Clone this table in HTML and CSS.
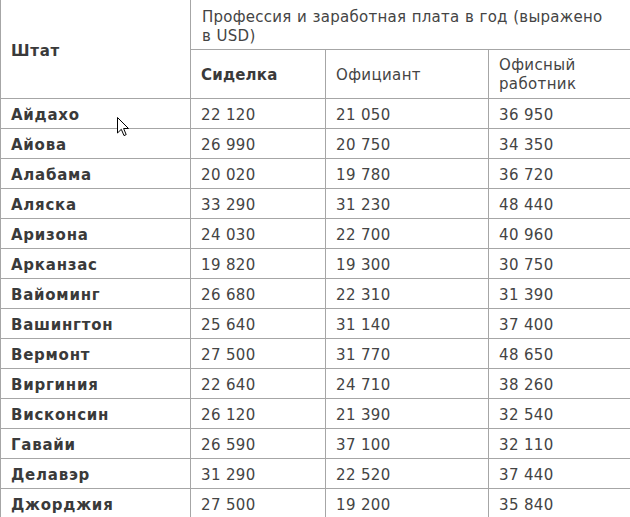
FILE: index.html
```html
<!DOCTYPE html>
<html lang="ru">
<head>
<meta charset="utf-8">
<title>Зарплаты</title>
<link rel="stylesheet" href="styles.css">
</head>
<body>
<div class="wrap">
<table class="pay">
  <colgroup>
    <col class="c1"><col class="c2"><col class="c3"><col class="c4">
  </colgroup>
  <thead>
    <tr class="h1">
      <th rowspan="2" class="state-h">Штат</th>
      <th colspan="3" class="group">Профессия и заработная плата в год (выражено<br>в USD)</th>
    </tr>
    <tr class="h2">
      <th class="bold">Сиделка</th>
      <th>Официант</th>
      <th>Офисный<br>работник</th>
    </tr>
  </thead>
  <tbody>
    <tr><th>Айдахо</th><td>22 120</td><td>21 050</td><td>36 950</td></tr>
    <tr><th>Айова</th><td>26 990</td><td>20 750</td><td>34 350</td></tr>
    <tr><th>Алабама</th><td>20 020</td><td>19 780</td><td>36 720</td></tr>
    <tr><th>Аляска</th><td>33 290</td><td>31 230</td><td>48 440</td></tr>
    <tr><th>Аризона</th><td>24 030</td><td>22 700</td><td>40 960</td></tr>
    <tr><th>Арканзас</th><td>19 820</td><td>19 300</td><td>30 750</td></tr>
    <tr><th>Вайоминг</th><td>26 680</td><td>22 310</td><td>31 390</td></tr>
    <tr><th>Вашингтон</th><td>25 640</td><td>31 140</td><td>37 400</td></tr>
    <tr><th>Вермонт</th><td>27 500</td><td>31 770</td><td>48 650</td></tr>
    <tr><th>Виргиния</th><td>22 640</td><td>24 710</td><td>38 260</td></tr>
    <tr><th>Висконсин</th><td>26 120</td><td>21 390</td><td>32 540</td></tr>
    <tr><th>Гавайи</th><td>26 590</td><td>37 100</td><td>32 110</td></tr>
    <tr><th>Делавэр</th><td>31 290</td><td>22 520</td><td>37 440</td></tr>
    <tr><th>Джорджия</th><td>27 500</td><td>19 200</td><td>35 840</td></tr>
  </tbody>
</table>
<svg class="cursor" width="13" height="20" viewBox="0 0 13 20">
  <path d="M0.5 0.5 L0.5 16 L4.3 12.3 L7 18.6 L9.2 17.6 L6.6 11.5 L11.5 11.5 Z" fill="#fff" stroke="#000" stroke-width="1" stroke-linejoin="miter"/>
</svg>
</div>
</body>
</html>
```
FILE: styles.css
```css
html, body {
  margin: 0;
  padding: 0;
  background: #fff;
  overflow: hidden;
  width: 630px;
  height: 517px;
}
.wrap {
  position: relative;
  width: 630px;
  height: 517px;
  overflow: hidden;
}
.pay {
  border-collapse: collapse;
  table-layout: fixed;
  width: 632px;
  margin: -1px 0 0 0;
  font-family: "DejaVu Sans", Verdana, sans-serif;
  font-size: 15px;
  line-height: 19px;
  color: #444;
  letter-spacing: 0.35px;
}
.c1 { width: 190px; }
.c2 { width: 135px; }
.c3 { width: 163px; }
.c4 { width: 144px; }
.pay th, .pay td {
  border: 1px solid #a6a6a6;
  padding: 7px 10px 3px 10px;
  text-align: left;
  vertical-align: middle;
  font-weight: normal;
  height: 19px;
  white-space: nowrap;
}
.pay tbody th, .pay .state-h {
  font-weight: bold;
  color: #3a3a3a;
  letter-spacing: 0.75px;
}
.pay .h2 th.bold {
  font-weight: bold;
  color: #3a3a3a;
  letter-spacing: 0.2px;
}
.pay .h1 th.group {
  height: 38px;
  padding: 8px 10px 3px 11px;
  letter-spacing: 0.25px;
  word-spacing: 0.5px;
}
.pay .h2 th {
  height: 37px;
  padding: 6px 10px 4px 10px;
}
.pay .state-h {
  padding: 4px 10px 0 10px;
}
.cursor {
  position: absolute;
  left: 117px;
  top: 117px;
}
```
